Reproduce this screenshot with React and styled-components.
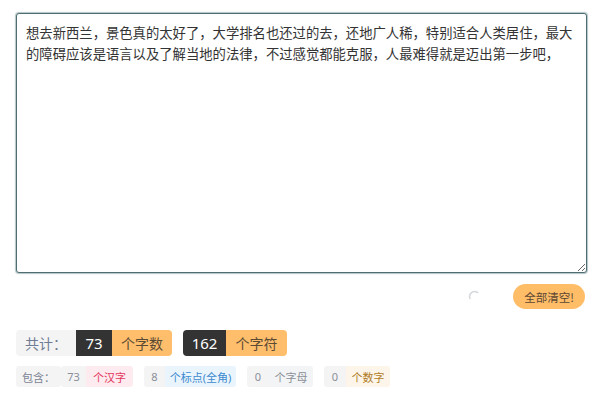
import React from "react";
import styled, { createGlobalStyle } from "styled-components";

const Global = createGlobalStyle`
  html, body { margin: 0; padding: 0; background: #fff; }
  body { font-family: "Noto Sans", "Noto Sans CJK SC", sans-serif; }
`;

const Page = styled.div`
  padding: 13px 13px 0 16px;
  display: flex;
  flex-direction: column;
`;

const TextBox = styled.textarea`
  box-sizing: border-box;
  width: 571px;
  height: 260px;
  margin: 0;
  padding: 8px 9px;
  border: 1px solid #4f6e74;
  border-radius: 3px;
  box-shadow: 0 0 1px 1px rgba(120, 145, 150, 0.55);
  outline: none;
  font-family: "Noto Sans CJK SC", sans-serif;
  font-size: 13.33px;
  line-height: 21px;
  color: #333;
  resize: both;
`;

const ActionRow = styled.div`
  display: flex;
  justify-content: flex-end;
  align-items: center;
  margin-top: 11px;
  gap: 32px;
`;

const Spinner = styled.svg`
  width: 13px;
  height: 13px;
  display: block;
`;

const ClearButton = styled.button`
  height: 25px;
  width: 72px;
  border: none;
  border-radius: 13px;
  background: #ffbd68;
  color: #5a4633;
  font-family: "Noto Sans CJK SC", sans-serif;
  font-size: 11.5px;
  padding: 0;
  margin-right: 2px;
  cursor: pointer;
`;

const StatsRow = styled.div`
  display: flex;
  align-items: center;
  gap: 11px;
  margin-top: 21px;
`;

const Group = styled.div`
  display: flex;
  border-radius: ${(p) => p.$r || 4}px;
  overflow: hidden;
`;

const BigCell = styled.span`
  box-sizing: border-box;
  height: 26px;
  width: ${(p) => p.$w}px;
  display: flex;
  align-items: center;
  justify-content: center;
  font-family: "Noto Sans", "Noto Sans CJK SC", sans-serif;
  font-size: ${(p) => p.$fs || 14}px;
  background: ${(p) => p.$bg};
  color: ${(p) => p.$fg};
`;

const SmallRow = styled.div`
  display: flex;
  align-items: center;
  gap: 11px;
  margin-top: 10px;
`;

const SmallCell = styled.span`
  box-sizing: border-box;
  height: 21px;
  width: ${(p) => p.$w}px;
  display: flex;
  align-items: center;
  justify-content: center;
  font-family: "Noto Sans", "Noto Sans CJK SC", sans-serif;
  font-size: 11px;
  background: ${(p) => p.$bg};
  color: ${(p) => p.$fg};
  border-radius: ${(p) => p.$rad || "0"};
`;

const TEXT =
  "想去新西兰，景色真的太好了，大学排名也还过的去，还地广人稀，特别适合人类居住，最大的障碍应该是语言以及了解当地的法律，不过感觉都能克服，人最难得就是迈出第一步吧，";

const smallGroups = [
  { n: "73", label: "个汉字", nw: 25, lw: 47, bg: "#feebef", fg: "#e2375c" },
  { n: "8", label: "个标点(全角)", nw: 21, lw: 71, bg: "#eaf4fc", fg: "#3d8bd0" },
  { n: "0", label: "个字母", nw: 22, lw: 44, bg: "#f3f4f5", fg: "#8a9099" },
  { n: "0", label: "个数字", nw: 22, lw: 44, bg: "#fdf5e9", fg: "#b07b25" },
];

export default function App() {
  return (
    <>
      <Global />
      <Page>
        <TextBox defaultValue={TEXT} spellCheck={false} />
        <ActionRow>
          <Spinner viewBox="0 0 13 13">
            <path
              d="M2 8.5 A5 5 0 0 1 9.5 2.5"
              fill="none"
              stroke="#d5d8dc"
              strokeWidth="1.6"
              strokeLinecap="round"
            />
          </Spinner>
          <ClearButton>全部清空!</ClearButton>
        </ActionRow>
        <StatsRow>
          <Group>
            <BigCell $w={60} $bg="#f4f4f5" $fg="#6f7c93">共计：</BigCell>
            <BigCell $w={36} $fs={15} $bg="#333" $fg="#fff">73</BigCell>
            <BigCell $w={60} $bg="#ffbe6b" $fg="#5b4a34">个字数</BigCell>
          </Group>
          <Group>
            <BigCell $w={43} $fs={15} $bg="#333" $fg="#fff">162</BigCell>
            <BigCell $w={61} $bg="#ffbe6b" $fg="#5b4a34">个字符</BigCell>
          </Group>
        </StatsRow>
        <SmallRow>
          {smallGroups.map((g, i) => (
            <Group key={i} $r={3}>
              {i === 0 && (
                <SmallCell $w={45} $bg="#f4f4f5" $fg="#7c8494" $rad="0 3px 3px 0">
                  包含：
                </SmallCell>
              )}
              <SmallCell $w={g.nw} $bg="#f4f4f5" $fg="#8a8f99" $rad={i === 0 ? "3px 0 0 3px" : "0"}>
                {g.n}
              </SmallCell>
              <SmallCell $w={g.lw} $bg={g.bg} $fg={g.fg}>
                {g.label}
              </SmallCell>
            </Group>
          ))}
        </SmallRow>
      </Page>
    </>
  );
}
